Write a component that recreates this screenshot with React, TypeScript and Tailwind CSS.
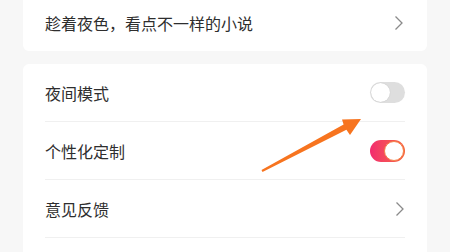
import React from 'react';

const FONT = { fontFamily: '"Noto Sans CJK SC", "Noto Sans", sans-serif' };

function Chevron() {
  return (
    <svg width="10" height="16" viewBox="0 0 10 16" className="text-[#8a8a8a]">
      <path d="M1.5 1.5 L8 8 L1.5 14.5" fill="none" stroke="currentColor" strokeWidth="1.3" />
    </svg>
  );
}

function Toggle({ on }: { on: boolean }) {
  if (on) {
    return (
      <div className="w-[35px] h-[22px] rounded-full bg-gradient-to-r from-[#f22a6e] to-[#f7653a] flex items-center justify-end p-[1px]">
        <div className="w-[20px] h-[20px] rounded-full bg-white border border-[#f5834a]" />
      </div>
    );
  }
  return (
    <div className="w-[35px] h-[21px] rounded-full bg-[#dedede] flex items-center p-[1px]">
      <div className="w-[19px] h-[19px] rounded-full bg-white shadow-[0_0_1px_rgba(0,0,0,0.2)]" />
    </div>
  );
}

function Row({ label, children }: { label: string; children: React.ReactNode }) {
  return (
    <div className="h-[58px] flex items-center justify-between border-b border-[#f0f0f0]">
      <span className="text-[16px] text-[#2e2e2e]">{label}</span>
      {children}
    </div>
  );
}

export default function App() {
  return (
    <div className="relative w-[450px] h-[252px] overflow-hidden bg-[#f7f7f7] px-[23px]" style={FONT}>
      {/* top card */}
      <div className="h-[51px] bg-white rounded-b-[6px] px-[22px]">
        <div className="h-[46px] flex items-center justify-between pr-[1px]">
          <span className="text-[16px] text-[#2e2e2e]">趁着夜色，看点不一样的小说</span>
          <Chevron />
        </div>
      </div>

      {/* settings card */}
      <div className="mt-[13px] bg-white rounded-[6px] px-[22px] pb-[20px]">
        <Row label="夜间模式">
          <Toggle on={false} />
        </Row>
        <Row label="个性化定制">
          <Toggle on={true} />
        </Row>
        <Row label="意见反馈">
          <Chevron />
        </Row>
      </div>

      {/* annotation arrow */}
      <svg className="absolute left-0 top-0 pointer-events-none" width="450" height="252" viewBox="0 0 450 252">
        <path d="M261.5 170.1 L343.6 124.4 L342 119.5 L361 119 L350 135 L346.4 129.7 L262.5 171.9 Z" fill="#f7741f" />
      </svg>
    </div>
  );
}
